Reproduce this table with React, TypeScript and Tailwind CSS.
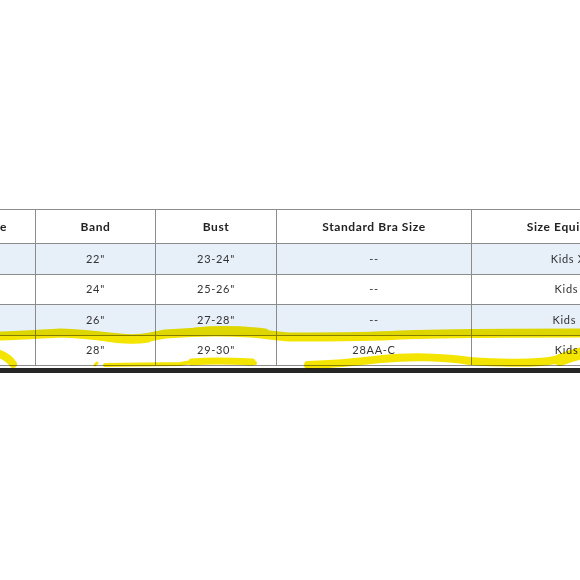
import React from "react";

const cols = [
  { w: "w-[120px]" },
  { w: "w-[120px]" },
  { w: "w-[121px]" },
  { w: "w-[195px]" },
  { w: "w-[200px]" },
];

const rows: { cells: string[]; h: string; bg: string }[] = [
  { cells: ["XS", "22\"", "23-24\"", "--", "Kids XS"], h: "h-[31px]", bg: "bg-[#e7eff9]" },
  { cells: ["S", "24\"", "25-26\"", "--", "Kids S"], h: "h-[30px]", bg: "bg-white" },
  { cells: ["M", "26\"", "27-28\"", "--", "Kids M"], h: "h-[31px]", bg: "bg-[#e7eff9]" },
  { cells: ["L", "28\"", "29-30\"", "28AA-C", "Kids L"], h: "h-[30px]", bg: "bg-white" },
];

const headers = ["Size", "Band", "Bust", "Standard Bra Size", "Size Equivalent"];

export default function App() {
  return (
    <div
      className="relative w-[580px] h-[580px] overflow-hidden bg-white"
      style={{ fontFamily: "Lato, 'Noto Sans', sans-serif" }}
    >
      <div className="pt-[209px]">
        <div className="ml-[-84px] w-[756px] border-t border-[#8c8c8c]">
          <div className="flex h-[34px] border-b border-[#8c8c8c] bg-white">
            {headers.map((t, i) => (
              <div
                key={i}
                className={`${cols[i].w} shrink-0 flex items-center border-r border-[#8c8c8c] text-[12px] font-bold tracking-[0.6px] text-[#222] ${
                  i === 0 ? "justify-end pr-[28px]" : "justify-center"
                }`}
              >
                {t}
              </div>
            ))}
          </div>
          {rows.map((r, ri) => (
            <div key={ri} className={`flex ${r.h} border-b border-[#8c8c8c] ${r.bg}`}>
              {r.cells.map((c, ci) => (
                <div
                  key={ci}
                  className={`${cols[ci].w} shrink-0 flex items-center justify-center border-r border-[#8c8c8c] text-[11px] tracking-[0.7px] text-[#333]`}
                >
                  {c}
                </div>
              ))}
            </div>
          ))}
        </div>
        <div className="mt-[2px] h-[5px] w-full bg-[#262626]" />
      </div>

      <svg
        className="pointer-events-none absolute left-0 top-0 mix-blend-multiply"
        width="580"
        height="580"
        viewBox="0 0 580 580"
      >
        <g fill="none" stroke="#f4e500" strokeLinecap="round" strokeLinejoin="round">
          <path
            d="M -5 336 C 20 336 40 334 60 333 C 80 333 95 336 120 338 C 140 340 150 337 165 334 C 190 332 220 331 250 333 C 265 334 275 336 290 337 C 330 337 370 337 400 335 C 440 333 500 333 590 333"
            strokeWidth="9"
          />
          <path d="M 95 336 C 110 339 130 342 148 339" strokeWidth="7" />
          <path d="M 195 331 C 215 329 240 329 265 332" strokeWidth="7" />
          <path d="M -6 352 Q 8 356 13 364" strokeWidth="8" />
          <path d="M 95 365 L 97 363" strokeWidth="3" />
          <path
            d="M 105 365 L 180 364 C 188 363 195 361 205 361 C 225 361 240 362 255 363"
            strokeWidth="4"
          />
          <path d="M 192 362 C 215 360 235 361 252 362" strokeWidth="7" />
          <path
            d="M 308 365 C 340 364 365 361 382 359 C 410 356 445 357 470 361 C 500 363 535 364 555 360 C 568 356 578 352 590 350"
            strokeWidth="8"
          />
          <path d="M 560 360 C 570 356 578 353 590 352" strokeWidth="12" />
        </g>
      </svg>
    </div>
  );
}
